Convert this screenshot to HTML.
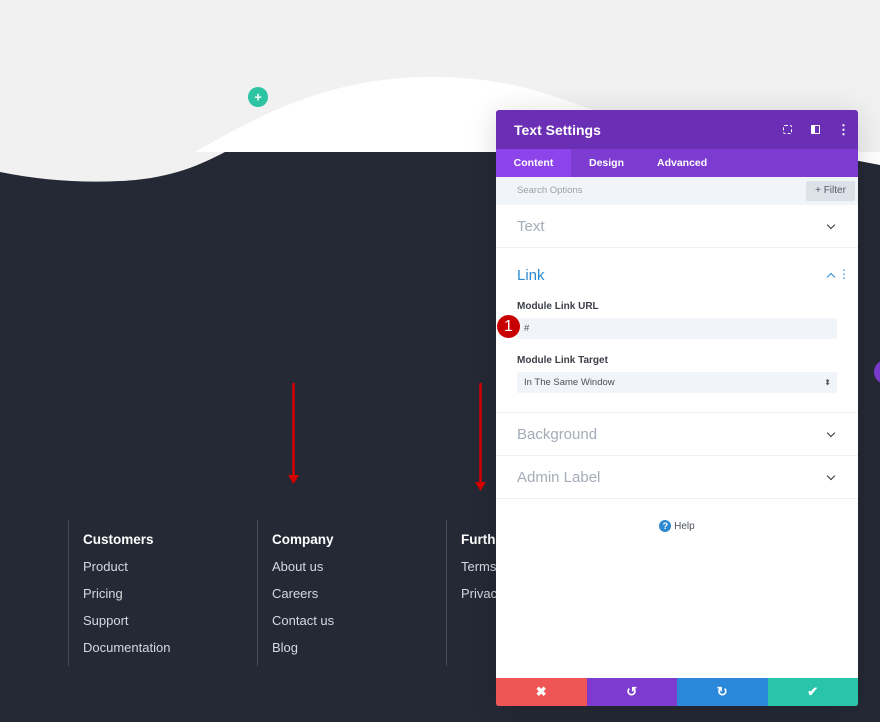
<!DOCTYPE html>
<html><head><meta charset="utf-8"><style>
*{margin:0;padding:0;box-sizing:border-box}
body{width:880px;height:722px;overflow:hidden;background:#252935;font-family:"Liberation Sans",sans-serif;position:relative}
.abs{position:absolute}
.col{position:absolute;top:520px;height:146px;border-left:1px solid #474b57;padding-left:14px;color:#d6d8de;font-size:13px}
.col h4{color:#fff;font-size:13.5px;font-weight:bold;margin-top:11px;line-height:17px;margin-bottom:10px}
.col div{margin-bottom:10px;line-height:17px}
.panel{position:absolute;left:496px;top:110px;width:362px;height:596px;background:#fff;border-radius:3px;overflow:hidden;box-shadow:0 4px 30px rgba(0,0,0,.15)}
.sec{height:43px;border-bottom:1px solid #eef0f3;padding-left:21px;font-size:15px;color:#a4acb8;line-height:43px;position:relative}
.chev{position:absolute;right:24px;top:17px;width:6px;height:6px;border-right:1.8px solid #333;border-bottom:1.8px solid #333;transform:rotate(45deg)}
.lbl{font-size:10px;font-weight:bold;color:#3b3f46;margin-left:21px}
.inp{margin:0 21px;height:21px;background:#f1f4f8;border-radius:2px;font-size:9.5px;color:#4b5059;line-height:21px;padding-left:7px;position:relative}
</style></head><body>
<svg class="abs" style="left:0;top:0" width="880" height="200">
<rect width="880" height="152" fill="#f1f1f1"/>
<path d="M0 152 L0 172 C40 180 80 183 120 181 C170 179 200 165 225 152 Z" fill="#f1f1f1"/>
<path d="M195 152 C260 115 330 77 430 77 C520 77 560 100 600 112 L880 165 L880 152 Z" fill="#fff"/>
<path d="M858 176 L880 168 L880 200 L858 200 Z" fill="#252935"/>
<circle cx="258" cy="97" r="10" fill="#2cc4a3"/>
<text x="258" y="101.5" font-size="13" fill="#fff" text-anchor="middle" font-family="Liberation Sans" font-weight="bold">+</text>
</svg>
<svg class="abs" style="left:286px;top:383px" width="200" height="110">
<line x1="7.5" y1="0" x2="7.5" y2="96" stroke="#d60000" stroke-width="2.5"/>
<path d="M2 92 L7.5 101 L13 92 Z" fill="#d60000"/>
<line x1="194.5" y1="-5" x2="194.5" y2="102" stroke="#d60000" stroke-width="2.5"/>
<path d="M189 99 L194.5 108 L200 99 Z" fill="#d60000"/>
</svg>
<div class="col" style="left:68px"><h4>Customers</h4><div>Product</div><div>Pricing</div><div>Support</div><div>Documentation</div></div>
<div class="col" style="left:257px"><h4>Company</h4><div>About us</div><div>Careers</div><div>Contact us</div><div>Blog</div></div>
<div class="col" style="left:446px"><h4>Further</h4><div>Terms</div><div>Privacy</div></div>
<div class="abs" style="left:874px;top:360px;width:24px;height:24px;border-radius:50%;background:#7b3ad0"></div>
<div class="panel">
 <div style="height:39px;background:#6a2fb5;color:#fff;font-size:14px;font-weight:bold;line-height:40px;padding-left:18px;position:relative">Text Settings
  <span class="abs" style="left:287px;top:15px;width:9px;height:9px;border:1.5px dashed #fff;border-radius:2px"></span>
  <span class="abs" style="left:315px;top:15px;width:9px;height:9px;border:1.5px solid #fff;border-left-width:4px;border-radius:1px"></span>
  <span class="abs" style="left:341px;top:0;font-size:13px">⋮</span>
 </div>
 <div style="height:28px;background:#7d3bd1;color:#fff;font-size:10.5px;font-weight:bold;line-height:28px;position:relative">
  <span class="abs" style="left:0;width:75px;height:28px;background:#8d44ea;text-align:center">Content</span>
  <span class="abs" style="left:93px">Design</span>
  <span class="abs" style="left:161px">Advanced</span>
 </div>
 <div style="height:28px;background:#f1f5f9;position:relative;font-size:9.5px;color:#9aa1ab;line-height:28px;padding-left:21px">Search Options
  <span class="abs" style="right:3px;top:4px;width:49px;height:20px;background:#dde2e8;border-radius:2px;line-height:20px;text-align:center;color:#545b66;font-size:10px">+ Filter</span></div>
 <div class="sec">Text<span class="chev"></span></div>
 <div style="height:165px;border-bottom:1px solid #eef0f3;position:relative">
  <div style="color:#2e8ad0;font-size:15px;padding:19px 0 0 21px">Link</div>
  <span class="abs" style="right:24px;top:26px;width:6px;height:6px;border-left:1.8px solid #2e8ad0;border-top:1.8px solid #2e8ad0;transform:rotate(45deg)"></span>
  <span class="abs" style="right:8px;top:19px;color:#2e8ad0;font-size:12px">⋮</span>
  <div class="lbl" style="margin-top:17px;margin-bottom:6px">Module Link URL</div>
  <div class="inp">#</div>
  <div class="abs" style="left:1px;top:67px;width:23px;height:23px;border-radius:50%;background:#c80000;color:#fff;font-size:16px;text-align:center;line-height:23px">1</div>
  <div class="lbl" style="margin-top:16px;margin-bottom:6px">Module Link Target</div>
  <div class="inp">In The Same Window<span class="abs" style="right:6px;top:0;font-size:8px;color:#555">⬍</span></div>
 </div>
 <div class="sec">Background<span class="chev"></span></div>
 <div class="sec">Admin Label<span class="chev"></span></div>
 <div style="text-align:center;font-size:10px;color:#4b5059;margin-top:21px"><span style="display:inline-block;width:12px;height:12px;border-radius:50%;background:#2e8ad0;color:#fff;font-size:9px;line-height:12px;font-weight:bold">?</span> Help</div>
 <div class="abs" style="left:0;top:568px;width:362px;height:28px;display:flex;color:#fff;font-size:13px;font-weight:bold;line-height:28px;text-align:center">
  <div style="flex:1;background:#ef5555">✖</div><div style="flex:1;background:#7e3bd0">↺</div><div style="flex:1;background:#2b87da">↻</div><div style="flex:1;background:#29c4a9">✔</div>
 </div>
</div>
</body></html>
